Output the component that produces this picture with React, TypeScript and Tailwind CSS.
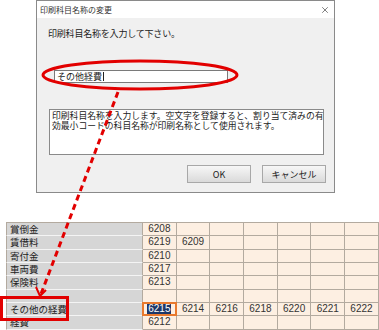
import { X } from 'lucide-react'

const jp = "font-['Noto_Sans_CJK_JP','Noto_Sans',sans-serif]"
const num = "font-['Liberation_Sans',Arial,sans-serif]"

type Row = { name: string; codes: string[] }

const rows: Row[] = [
  { name: '賞倒金', codes: ['6208'] },
  { name: '賃借料', codes: ['6219', '6209'] },
  { name: '寄付金', codes: ['6210'] },
  { name: '車両費', codes: ['6217'] },
  { name: '保険料', codes: ['6213'] },
  { name: '', codes: [] },
  { name: 'その他の経費', codes: ['6215', '6214', '6216', '6218', '6220', '6221', '6222'] },
  { name: '経費', codes: ['6212'] },
]

function Button({ label }: { label: string }) {
  return (
    <button
      type="button"
      className={`h-[18px] w-[64px] border border-[#a8a8a8] bg-gradient-to-b from-[#f7f7f7] to-[#dadada] text-[9px] leading-none text-[#222] ${jp}`}
    >
      {label}
    </button>
  )
}

function Dialog() {
  return (
    <div className="ml-[36px] flex h-[193px] w-[299px] flex-col border border-[#8a8a8a] bg-[#f0f0f0]">
      {/* title bar */}
      <div className="flex h-[17px] shrink-0 items-center justify-between bg-white pl-[3px] pr-[4px]">
        <span className={`text-[8px] leading-none text-[#333] ${jp}`}>印刷科目名称の変更</span>
        <X className="h-[10px] w-[10px] text-[#333]" strokeWidth={1.5} />
      </div>

      <div className="flex flex-1 flex-col">
        <p className={`ml-[11px] mt-[9px] whitespace-nowrap text-[9px] leading-[14px] tracking-[-0.2px] text-[#222] ${jp}`}>
          印刷科目名称を入力して下さい。
        </p>

        <div className="ml-[17px] mt-[29px] flex h-[13px] w-[174px] items-center border border-[#7a7a7a] bg-white pl-[2px]">
          <span className={`text-[9px] leading-none text-[#222] ${jp}`}>その他経費</span>
          <span className="ml-[1px] h-[9px] w-px bg-[#222]" />
        </div>

        <div
          className={`ml-[12px] mt-[26px] h-[46px] w-[275px] whitespace-nowrap border border-[#8a8a8a] bg-white px-[2px] pt-px text-[8.8px] leading-[10px] text-[#222] ${jp}`}
        >
          印刷科目名称を入力します。空文字を登録すると、割り当て済みの有
          <br />
          効最小コードの科目名称が印刷名称として使用されます。
        </div>

        <div className="ml-[150px] mt-[10px] flex gap-[11px]">
          <Button label="OK" />
          <Button label="キャンセル" />
        </div>
      </div>
    </div>
  )
}

function Table() {
  return (
    <div className="ml-[6px] mt-[29px] grid grid-cols-[137px_repeat(7,33.7px)] border-t border-[#b3aa9f]">
      {rows.map((r, i) => (
        <div key={i} className="contents">
          <div
            className={`flex h-[13.33px] items-center border-b border-l border-r border-b-[#f4f4f4] border-l-[#b3aa9f] border-r-[#b3aa9f] bg-[#d6d6d6] pl-[3px] text-[9.5px] leading-[10px] text-[#222] ${jp}`}
          >
            {r.name}
          </div>
          {Array.from({ length: 7 }).map((_, j) => {
            const code = r.codes[j] ?? ''
            const selected = i === 6 && j === 0
            return (
              <div
                key={j}
                className={`relative flex h-[13.33px] items-center justify-center border-b border-r border-[#b3aa9f] bg-[#fdefe2] text-[10px] leading-[10px] text-[#333] ${num}`}
              >
                {selected ? (
                  <>
                    <span className="absolute inset-[-1px] border-2 border-[#e8792e]" />
                    <span className="bg-[#1d3768] px-[1px] text-white">{code}</span>
                  </>
                ) : (
                  code
                )}
              </div>
            )
          })}
        </div>
      ))}
    </div>
  )
}

export default function App() {
  return (
    <div className="relative h-[330px] w-[379px] overflow-hidden bg-white">
      <Dialog />
      <Table />

      {/* red annotations */}
      <svg className="pointer-events-none absolute inset-0" width="379" height="330" viewBox="0 0 379 330">
        <ellipse cx="140" cy="75" rx="97" ry="14" fill="none" stroke="#e20000" strokeWidth="3" />
        <line
          x1="118"
          y1="92"
          x2="41"
          y2="294"
          stroke="#e20000"
          strokeWidth="3"
          strokeDasharray="6 4"
        />
        <polyline points="36,287 40,296 46,290" fill="none" stroke="#e20000" strokeWidth="2" />
        <rect x="1.5" y="297.5" width="66" height="22" fill="none" stroke="#e20000" strokeWidth="3" />
      </svg>
    </div>
  )
}
